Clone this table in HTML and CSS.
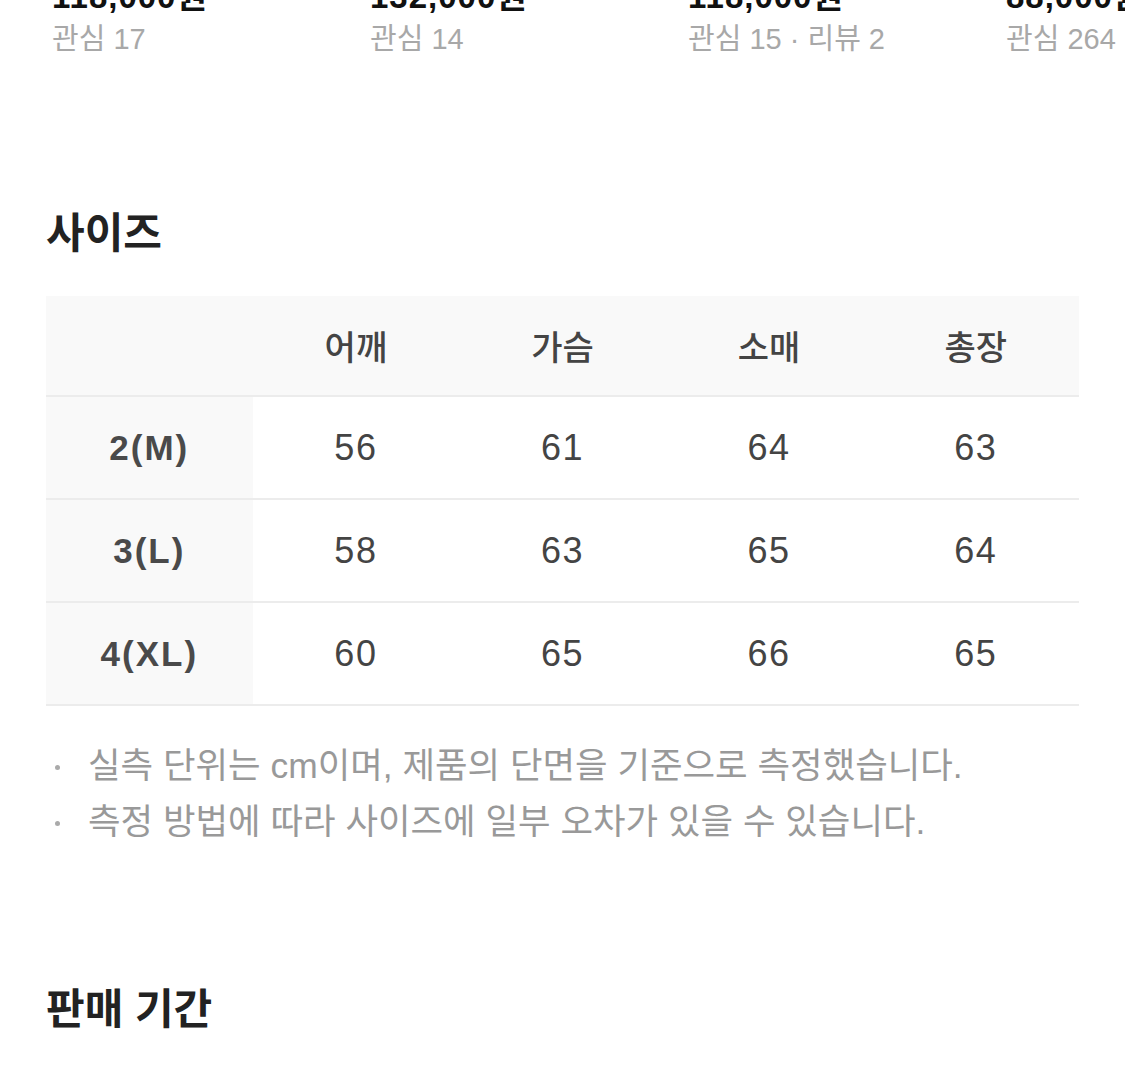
FILE: index.html
```html
<!DOCTYPE html>
<html lang="ko">
<head>
<meta charset="utf-8">
<link rel="stylesheet" href="styles.css">
</head>
<body>
<div class="products">
  <div class="card"><div class="price">118,000원</div><div class="meta">관심 17</div></div>
  <div class="card"><div class="price">132,000원</div><div class="meta">관심 14</div></div>
  <div class="card"><div class="price">118,000원</div><div class="meta">관심 15 · 리뷰 2</div></div>
  <div class="card"><div class="price">88,000원</div><div class="meta">관심 264</div></div>
</div>

<section class="section size">
  <h2 class="title">사이즈</h2>
  <table class="size-table">
    <thead>
      <tr><th class="corner"></th><th>어깨</th><th>가슴</th><th>소매</th><th>총장</th></tr>
    </thead>
    <tbody>
      <tr><th class="label">2(M)</th><td>56</td><td>61</td><td>64</td><td>63</td></tr>
      <tr><th class="label">3(L)</th><td>58</td><td>63</td><td>65</td><td>64</td></tr>
      <tr><th class="label">4(XL)</th><td>60</td><td>65</td><td>66</td><td>65</td></tr>
    </tbody>
  </table>
  <ul class="notes">
    <li>실측 단위는 cm이며, 제품의 단면을 기준으로 측정했습니다.</li>
    <li>측정 방법에 따라 사이즈에 일부 오차가 있을 수 있습니다.</li>
  </ul>
</section>

<section class="section period">
  <h2 class="title">판매 기간</h2>
</section>
</body>
</html>
```

FILE: styles.css
```css
html, body {
  margin: 0;
  padding: 0;
  background: #fff;
  overflow: hidden;
}
body {
  font-family: "Liberation Sans", "Noto Sans CJK KR", sans-serif;
  color: #222;
  width: 1125px;
  height: 1072px;
}
.products {
  display: grid;
  grid-template-columns: repeat(4, 300px);
  column-gap: 18px;
  padding-left: 52px;
  margin-top: -23px;
}
.price {
  font-size: 33px;
  font-weight: 700;
  line-height: 40px;
  height: 40px;
  color: #111;
  letter-spacing: 1px;
  white-space: nowrap;
}
.meta {
  font-size: 29px;
  line-height: 36px;
  color: #a8a8a8;
  white-space: nowrap;
  margin-top: 4px;
}
.section {
  padding: 0 46px;
}
.title {
  margin: 0;
  font-size: 42px;
  font-weight: 700;
  line-height: 50px;
  color: #222;
}
.size .title {
  margin-top: 152px;
}
.size-table {
  margin-top: 37px;
  width: 1033px;
  border-collapse: collapse;
  table-layout: fixed;
}
.size-table th,
.size-table td {
  text-align: center;
  padding: 0;
  color: #444;
  border-bottom: 2px solid #ececec;
}
.size-table thead th {
  height: 99px;
  background: #f9f9f9;
  font-size: 34px;
  font-weight: 500;
  font-family: "Noto Sans CJK KR", sans-serif;
  color: #444;
}
.size-table tbody th,
.size-table tbody td {
  height: 101px;
}
.size-table tbody th.label {
  background: #f9f9f9;
  font-size: 35px;
  font-weight: 700;
  letter-spacing: 2px;
  color: #4a4a4a;
}
.size-table tbody td {
  font-size: 36px;
  font-weight: 400;
  letter-spacing: 1.5px;
  color: #444;
}
.notes {
  list-style: none;
  margin: 32px 0 0;
  padding: 0;
}
.notes li {
  position: relative;
  padding-left: 42px;
  font-size: 35.4px;
  line-height: 56px;
  color: #999;
  white-space: nowrap;
}
.notes li::before {
  content: "";
  position: absolute;
  left: 9px;
  top: 27px;
  width: 5px;
  height: 5px;
  border-radius: 50%;
  background: #aaa;
}
.period .title {
  margin-top: 135px;
}
```
